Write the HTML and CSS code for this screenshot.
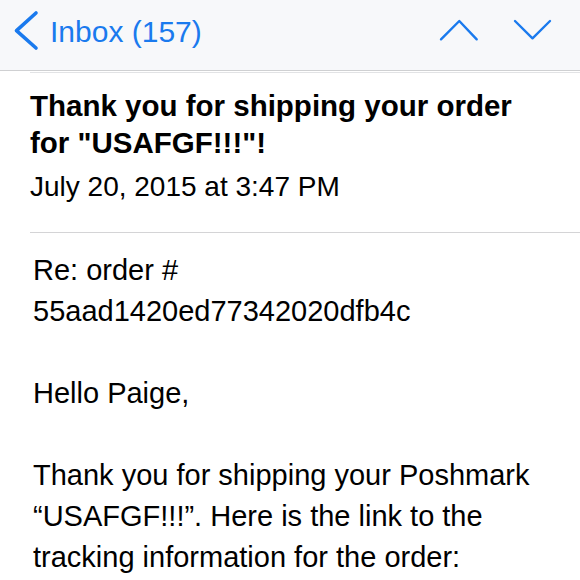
FILE: index.html
```html
<!DOCTYPE html>
<html>
<head>
<meta charset="utf-8">
<link rel="stylesheet" href="styles.css">
</head>
<body>
<header class="navbar">
  <svg class="back-icon" width="28" height="42" viewBox="0 0 28 42"><polyline points="24,3 4.5,20.7 24,38" fill="none" stroke="#1a7aee" stroke-width="3.6" stroke-linecap="round" stroke-linejoin="round"/></svg>
  <span class="back-label">Inbox (157)</span>
  <svg class="nav-icon up" width="46" height="30" viewBox="0 0 46 30"><polyline points="5,24.3 23.3,6 40.7,24.3" fill="none" stroke="#1a7aee" stroke-width="2.4" stroke-linecap="round" stroke-linejoin="round"/></svg>
  <svg class="nav-icon down" width="46" height="30" viewBox="0 0 46 30"><polyline points="5,6 22.5,23.3 40,6" fill="none" stroke="#1a7aee" stroke-width="2.4" stroke-linecap="round" stroke-linejoin="round"/></svg>
</header>
<div class="shadow-line"></div>
<section class="mail-head">
  <h1 class="subject">Thank you for shipping your order for "USAFGF!!!"!</h1>
  <div class="date">July 20, 2015 at 3:47 PM</div>
</section>
<div class="separator"></div>
<section class="mail-body">
  <p>Re: order #<br>55aad1420ed77342020dfb4c</p>
  <p>Hello Paige,</p>
  <p>Thank you for shipping your Poshmark “USAFGF!!!”. Here is the link to the tracking information for the order:</p>
</section>
</body>
</html>
```
FILE: styles.css
```css
html, body {
  margin: 0;
  padding: 0;
  background: #ffffff;
  font-family: "Liberation Sans", Arial, sans-serif;
  color: #000;
  overflow: hidden;
}
.navbar {
  display: flex;
  align-items: flex-start;
  height: 70px;
  background: #f7f8fa;
  border-bottom: 1px solid #cfd0d2;
  box-sizing: content-box;
}
.back-icon {
  margin-left: 12px;
  margin-top: 10px;
  flex: none;
}
.back-label {
  margin-left: 10px;
  margin-top: 17px;
  font-size: 30px;
  line-height: 30px;
  color: #1a7aee;
}
.nav-icon {
  margin-top: 15px;
  flex: none;
}
.nav-icon.up {
  margin-left: auto;
}
.nav-icon.down {
  margin-left: 28px;
  margin-right: 24px;
}
.shadow-line {
  margin-left: 30px;
  height: 1px;
  margin-top: 1px;
  background: #e2e3e5;
}
.mail-head {
  padding: 14px 30px 0 30px;
}
.subject {
  margin: 0;
  font-size: 29.5px;
  line-height: 37px;
  font-weight: bold;
}
.date {
  margin-top: 11px;
  font-size: 28px;
  line-height: 30px;
}
.separator {
  margin-left: 30px;
  margin-top: 30px;
  height: 1px;
  background: #d4d4d6;
}
.mail-body {
  padding: 17px 20px 0 33px;
  font-size: 29px;
  line-height: 41px;
}
.mail-body p {
  margin: 0 0 41px 0;
}
```
